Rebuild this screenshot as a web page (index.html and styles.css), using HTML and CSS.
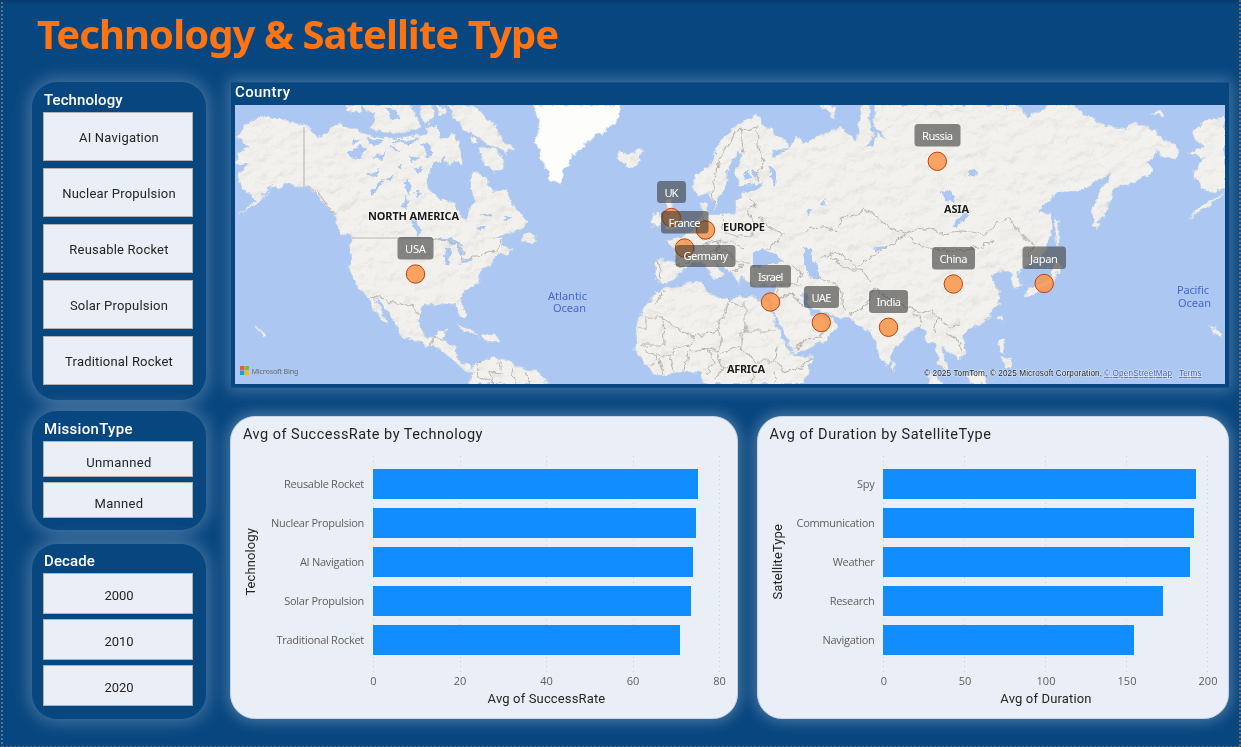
FILE: index.html
```html
<!DOCTYPE html>
<html lang="en">
<head>
<meta charset="utf-8">
<title>Technology &amp; Satellite Type</title>
<link rel="stylesheet" href="styles.css">
</head>
<body>
<div class="report">
  <h1 class="report-title"><span>Technology &amp; Satellite Type</span></h1>
  <div class="columns">
    <aside class="slicers">
      <section class="slicer slicer-technology">
        <h2>Technology</h2>
        <button>AI Navigation</button><button>Nuclear Propulsion</button><button>Reusable Rocket</button><button>Solar Propulsion</button><button>Traditional Rocket</button>
      </section>
      <section class="slicer slicer-mission">
        <h2>MissionType</h2>
        <button>Unmanned</button><button>Manned</button>
      </section>
      <section class="slicer slicer-decade">
        <h2>Decade</h2>
        <button>2000</button><button>2010</button><button>2020</button>
      </section>
    </aside>
    <main class="visuals">
      <section class="map-panel">
        <h2>Country</h2>
        <svg class="map" viewBox="235 105 990 279" width="990" height="279">
          <defs>
            <filter id="coast" x="235" y="105" width="990" height="279" filterUnits="userSpaceOnUse">
              <feTurbulence type="fractalNoise" baseFrequency="0.13" numOctaves="3" seed="4" result="n"/>
              <feDisplacementMap in="SourceGraphic" in2="n" scale="8" xChannelSelector="R" yChannelSelector="G"/>
            </filter>
            <filter id="relief" x="235" y="105" width="990" height="279" filterUnits="userSpaceOnUse" color-interpolation-filters="sRGB">
              <feTurbulence type="fractalNoise" baseFrequency="0.05 0.09" numOctaves="4" seed="9" result="n"/>
              <feColorMatrix in="n" type="matrix" values="0 0 0 0 0  0 0 0 0 0  0 0 0 0 0  1 0 0 0 0" result="h"/>
              <feDiffuseLighting in="h" surfaceScale="2.6" diffuseConstant="1.1" lighting-color="#ffffff" result="l"><feDistantLight azimuth="225" elevation="62"/></feDiffuseLighting>
              <feComposite in="l" in2="SourceAlpha" operator="in"/>
            </filter>
            <g id="land">
              <path d="M237 137L245 125 262 117 275 118 303 125 320 138 328 131 340 123 358 130 372 137 385 138 405 138 425 135 438 128 442 142 448 147 445 155 438 162 430 168 426 188 438 198 455 203 460 215 466 222 470 208 475 200 472 190 472 173 482 175 493 192 507 190 513 205 528 222 523 228 507 233 490 238 503 238 502 246 512 249 507 257 498 252 490 265 482 268 477 283 460 297 462 305 466 316 461 316 455 305 440 303 422 305 418 315 420 327 425 337 437 338 438 330 446 330 443 340 455 346 456 356 461 363 470 365 473 371 462 368 452 358 438 348 422 343 400 335 397 323 385 308 374 297 380 311 387 323 382 320 368 297 358 287 350 272 350 245 352 238 340 230 332 212 315 192 303 186 285 183 272 190 275 183 262 195 258 201 242 188 238 175 250 163 237 163 238 153 250 147Z"/>
              <path d="M345 105L362 105 360 112 352 113ZM363 105L412 105 415 115 420 128 400 133 382 132 370 128 377 118ZM422 106L431 105 433 116 427 125 421 117ZM427 128L436 124 437 133 429 135ZM447 105L475 107 485 118 495 125 500 137 513 150 505 153 490 145 478 136 465 130 455 118ZM480 150L493 148 503 158 505 170 495 172 485 165ZM440 141L455 135 460 150 463 163 455 160 447 166ZM523 236L530 233 537 240 530 243 522 240ZM436 106L444 106 446 113 438 114ZM472 138L477 138 477 143 473 143Z"/>
              <path d="M469 384L473 365 490 358 507 360 520 368 540 373 547 384Z"/>
              <path d="M618 152L628 154 642 150 641 160 632 167 622 162ZM663 200L672 199 673 208 679 219 680 226 667 229 669 214ZM652 215L661 212 662 222 653 226Z"/>
              <path d="M655 260L677 262 673 247 667 240 682 237 695 230 703 217 700 204 706 202 707 215 723 215 735 212 735 202 747 192 763 187 764 182 740 185 734 172 744 155 738 151 727 172 728 182 720 198 715 208 710 192 698 195 693 185 695 175 710 165 720 142 737 125 755 115 763 125 783 138 787 148 770 149 773 160 781 154 795 142 797 135 803 143 817 138 840 127 857 142 861 108 862 105 869 105 870 125 873 138 865 146 874 148 877 134 886 140 884 134 874 125 876 105 1017 105 1027 117 1040 112 1050 105 1073 105 1083 115 1103 125 1127 130 1133 123 1150 127 1167 142 1182 150 1173 160 1157 152 1147 162 1153 172 1133 182 1113 188 1110 198 1108 208 1095 228 1092 208 1100 192 1113 173 1100 178 1083 190 1057 192 1037 213 1050 215 1052 235 1040 258 1023 267 1016 272 1022 285 1014 288 1010 274 1000 270 990 277 1000 292 998 305 983 323 967 328 963 335 967 352 957 360 950 352 942 347 945 364 952 375 938 362 935 342 928 342 925 328 917 327 907 335 892 352 887 366 880 355 872 332 863 328 850 318 830 315 815 309 804 292 800 295 813 315 823 320 832 318 837 327 823 342 793 353 788 338 777 318 770 303 775 285 753 285 742 275 740 284 730 272 713 259 723 275 716 280 703 263 692 262 680 272 673 280 663 283 655 277Z"/>
              <path d="M672 287L700 282 707 292 730 302 737 295 763 300 769 306 780 335 792 355 813 357 807 375 800 384 703 384 702 373 677 372 660 375 643 365 635 348 637 325 643 308 657 292Z"/>
              <path d="M1054 262L1062 266 1054 280 1044 288 1026 296 1028 288 1044 283 1052 275ZM1055 218L1058 220 1059 240 1056 246ZM998 319L1001 316 1002 323ZM999 340L1004 340 1005 352 1000 350ZM1002 357L1011 360 1010 368 1003 365ZM892 361L896 367 892 371ZM966 376L984 370 987 384 970 384ZM929 373L936 377 941 384 930 384ZM820 105L833 107 835 117 829 113ZM1152 114L1160 110 1164 116ZM1225 117L1207 120 1192 133 1203 147 1188 153 1207 158 1193 172 1203 188 1216 193 1225 188ZM455 324L470 329 479 337 468 332ZM482 336L494 336 498 340 484 340ZM709 262L712 269 709 272Z"/>
              <path d="M272 191L254 205 238 215 255 202ZM1225 192L1206 208 1188 219 1203 205ZM254 326L266 334 265 337ZM1208 326L1222 334 1221 337Z"/>
            </g>
            <path id="ice" d="M533 105L540 122 536 142 543 162 550 178 562 184 564 172 573 155 597 135 617 123 620 105Z"/>
            <g id="lakes">
              <path d="M753 253L761 248 775 253 783 262 766 264 753 267ZM802 249L812 248 813 260 819 266 820 280 808 276 805 264ZM437 238L455 240 463 246 448 244ZM446 247L451 247 449 265 445 262ZM457 246L464 252 461 258ZM458 264L475 257 472 261ZM968 172L977 170 976 176 970 178ZM952 225L965 213 968 214 957 227ZM940 192L951 190 955 203 946 201ZM873 248L887 246 886 249 875 251ZM770 166L776 175 775 187 769 178ZM742 182L748 169 751 178Z"/>
              <path d="M348 153L360 145 367 148 359 159 350 158ZM374 156L385 153 382 161ZM366 173L380 169 377 177ZM370 194L380 181 385 179 375 192ZM386 178L394 175 389 182ZM407 178L412 187 409 195 405 187ZM412 221L417 219 421 231 418 234ZM407 156L421 158 411 162ZM389 145L401 150 394 151ZM480 215L490 213 493 217ZM503 216L512 218 505 220ZM477 227L486 226 482 231ZM400 205L412 201 408 207ZM391 140L410 140 421 137 409 145ZM422 143L431 146 435 155 426 157ZM384 108L396 112 402 121 392 118ZM404 194L409 204 405 209ZM414 168L423 166 419 175ZM397 165L404 163 401 170ZM415 190L422 194 417 197ZM366 136L371 140 384 141 372 147ZM352 139L360 141 354 145ZM1004 105L1007 107 1005 109ZM820 206L826 198 823 206ZM806 213L812 208 809 216ZM752 170L760 174 755 180Z"/>
            </g>
          </defs>
          <rect class="sea" x="235" y="105" width="990" height="279"/>
          <g filter="url(#coast)">
            <use href="#land" class="shore"/>
            <use href="#land" class="ground"/>
            <use href="#ice" class="snow"/>
            <use href="#lakes" class="sea"/>
          </g>
          <g class="hills" filter="url(#coast)"><g filter="url(#relief)"><use href="#land"/></g></g>
          <use href="#lakes" class="sea" filter="url(#coast)"/>
          <path class="borders" d="M304 127V186M352 238H432"/>
          <g class="borders" filter="url(#coast)">
            <path d="M304 186L318 192 331 211 335 216M432 238L455 244 465 251 462 261 484 254 498 249 502 241M369 297L387 299 399 305 409 303 420 316M429 346L436 337 443 341M480 360L477 375 495 384M499 362L501 373 489 372 494 383M512 369L515 384M525 371L529 384"/>
            <path d="M655 260L661 264 659 280M674 264L684 266M684 239L694 249 695 257 686 263M697 229L702 239 717 242 720 249 710 253M705 219L706 230M723 216L724 231 736 237 753 236 754 222 748 212 755 205 749 197M714 208L712 190 719 162 734 134 740 129 744 153M737 131L757 127 758 144 763 164 757 181M758 216L769 227 783 234 778 243 765 249M703 246L721 240 732 242 745 249M716 251L730 253 738 263 750 263M732 272L743 266M773 286L789 283 801 286M792 264L801 272 798 282M776 288L779 300 789 292 806 307M795 350L805 340 821 338 828 325M805 232L812 227 824 228 837 232 842 219 857 214 864 210 878 218 891 229 905 233 929 228 939 233 963 231 985 234 998 222 1009 219 1020 235 1034 244 1027 256M821 257L835 252 848 260 856 267 875 255 889 246 907 233M811 278L830 280 842 292 844 311M832 257L848 269 861 269 870 280M850 315L866 306 876 288 891 300 908 308 920 312 932 311 937 318 934 333M912 312L921 321 918 332M937 319L949 327 960 324M945 333L956 339 962 351M908 237L921 247 948 251 966 249 983 246 992 241"/>
            <path d="M638 328H646V318H663L692 338 716 332 730 302M663 317L664 345H641M663 292L654 306M693 338L690 346 676 348 668 357 649 353M716 332L722 336 718 350 690 349M730 302L745 307 745 327 741 347 719 353M745 301V331H776M741 331L741 349 756 361 774 361 779 346M688 351L684 371M670 357L673 372M660 359L663 374M707 350L714 363 705 374M717 353L724 368 714 380M724 368L743 364 755 372 753 384M774 360L783 373 801 368 811 358M775 372L774 384M645 350L657 358 651 367"/>
          </g>
          <g class="continent">
            <text x="368" y="220" textLength="91">NORTH AMERICA</text><text x="723" y="231" textLength="42">EUROPE</text><text x="944" y="213" textLength="25">ASIA</text><text x="727" y="373" textLength="38">AFRICA</text>
          </g>
          <g class="ocean">
            <text x="548" y="300" textLength="39">Atlantic</text><text x="553" y="312" textLength="33">Ocean</text><text x="1177" y="294" textLength="32">Pacific</text><text x="1178" y="307" textLength="33">Ocean</text>
          </g>
          <g class="bubbles">
            <circle cx="415.5" cy="274" r="9.2"/><circle cx="671.3" cy="217.5" r="9.2"/><circle cx="705.5" cy="230" r="9.2"/><circle cx="684.5" cy="248" r="9.2"/><circle cx="770.5" cy="302" r="9.2"/><circle cx="821.3" cy="322.5" r="9.2"/><circle cx="888.5" cy="327.3" r="9.2"/><circle cx="953.3" cy="284" r="9.2"/><circle cx="937.3" cy="161.3" r="9.2"/><circle cx="1044.2" cy="283.5" r="9.2"/>
          </g>
          <g class="tags">
            <rect x="397.5" y="237" width="36" height="22.5" rx="3.5"/><rect x="657" y="181" width="29" height="22" rx="3.5"/><rect x="661" y="211" width="47.5" height="22.5" rx="3.5"/><rect x="675.5" y="245" width="60" height="22" rx="3.5"/><rect x="750" y="265" width="41" height="22.5" rx="3.5"/><rect x="804" y="286" width="35" height="22" rx="3.5"/><rect x="869" y="290" width="39" height="23" rx="3.5"/><rect x="932" y="247" width="43" height="22.5" rx="3.5"/><rect x="914.5" y="124" width="46" height="22.5" rx="3.5"/><rect x="1022.5" y="246.5" width="43.5" height="22.5" rx="3.5"/>
          </g>
          <g class="tag-text">
            <text x="405" y="253" textLength="21">USA</text><text x="664.5" y="197" textLength="14">UK</text><text x="668.5" y="227" textLength="32">France</text><text x="683.5" y="260" textLength="44.5">Germany</text><text x="758" y="281" textLength="25.5">Israel</text><text x="811.5" y="302" textLength="20">UAE</text><text x="876.5" y="306" textLength="24.5">India</text><text x="939.5" y="263" textLength="28">China</text><text x="922" y="140" textLength="31">Russia</text><text x="1030" y="263" textLength="28">Japan</text>
          </g>
          <rect x="240" y="366" width="4.3" height="4.3" fill="#f1592a"/><rect x="244.7" y="366" width="4.3" height="4.3" fill="#80bb3e"/><rect x="240" y="370.7" width="4.3" height="4.3" fill="#0aa5ef"/><rect x="244.7" y="370.7" width="4.3" height="4.3" fill="#fdb913"/>
          <text class="bing" x="251.5" y="373.5" textLength="47">Microsoft Bing</text>
          <g class="credits">
            <text x="924" y="376" textLength="178">© 2025 TomTom, © 2025 Microsoft Corporation,</text>
            <text class="link" x="1104" y="376" textLength="68">© OpenStreetMap</text><text class="link" x="1179" y="376" textLength="22.5">Terms</text>
          </g>
        </svg>
      </section>
      <div class="charts">
        <section class="chart chart-rate">
          <h2>Avg of SuccessRate by Technology</h2>
          <div class="chart-body">
            <div class="axis-name"><span>Technology</span></div>
            <ul class="categories"><li>Reusable Rocket</li><li>Nuclear Propulsion</li><li>AI Navigation</li><li>Solar Propulsion</li><li>Traditional Rocket</li></ul>
            <div class="plot">
              <div class="gridlines"><i></i><i></i><i></i><i></i><i></i></div>
              <div class="bars"><b style="width:93.8%"></b><b style="width:93%"></b><b style="width:92.2%"></b><b style="width:91.7%"></b><b style="width:88.4%"></b></div>
              <div class="ticks"><span>0</span><span>20</span><span>40</span><span>60</span><span>80</span></div>
              <div class="value-name">Avg of SuccessRate</div>
            </div>
          </div>
        </section>
        <section class="chart chart-duration">
          <h2>Avg of Duration by SatelliteType</h2>
          <div class="chart-body">
            <div class="axis-name"><span>SatelliteType</span></div>
            <ul class="categories"><li>Spy</li><li>Communication</li><li>Weather</li><li>Research</li><li>Navigation</li></ul>
            <div class="plot">
              <div class="gridlines"><i></i><i></i><i></i><i></i><i></i></div>
              <div class="bars"><b style="width:96.1%"></b><b style="width:95.6%"></b><b style="width:94.4%"></b><b style="width:86%"></b><b style="width:77.2%"></b></div>
              <div class="ticks"><span>0</span><span>50</span><span>100</span><span>150</span><span>200</span></div>
              <div class="value-name">Avg of Duration</div>
            </div>
          </div>
        </section>
      </div>
    </main>
  </div>
</div>
</body>
</html>
```

FILE: styles.css
```css
* { box-sizing: border-box; }
body { margin: 0; background: #08467f; font-family: Roboto, "Liberation Sans", sans-serif; }
h1, h2, ul { margin: 0; padding: 0; font-weight: 400; list-style: none; }
.report {
  width: 1241px; height: 747px; overflow: hidden; padding-left: 32px;
  background:
    repeating-linear-gradient(#6b6a6c 0 2px, transparent 2px 4px) 1px 2px / 2px 100% no-repeat,
    repeating-linear-gradient(#6b6a6c 0 2px, transparent 2px 4px) 1239px 0 / 2px 100% no-repeat,
    repeating-linear-gradient(90deg, #6b6a6c 0 2px, transparent 2px 4px) 2px 746px / 100% 1px no-repeat,
    linear-gradient(#063c70, transparent 5px),
    #08467f;
}
.report-title {
  height: 82px; padding: 6px 0 0 5px; color: #ff7411;
  font: 700 40px/56px "Noto Sans", "Open Sans", sans-serif; white-space: nowrap;
}
.report-title span { letter-spacing: -.94px; }
.columns { display: flex; gap: 25px; }
.slicers { width: 174px; display: flex; flex-direction: column; }
.slicer {
  display: flex; flex-direction: column; padding: 0 13px 0 11px; border-radius: 25px;
  background: #08467f; box-shadow: 0 0 17px 3px rgba(225, 235, 250, .3);
}
.slicer h2 { color: #fff; font-size: 15px; font-weight: 500; line-height: 20px; letter-spacing: .1px; padding-left: 1px; }
.slicer button {
  font: 13px/16px Roboto, sans-serif; letter-spacing: .2px; color: #252423;
  background: #eaeff7; border: 1px solid #b3b0ad; padding: 0 0 0 2px;
}
.slicer-technology { height: 318px; padding-top: 8px; gap: 7px; }
.slicer-technology h2 { margin-bottom: -5px; }
.slicer-technology button { height: 49px; padding-top: 3px; }
.slicer-mission { height: 119px; margin-top: 11px; padding-top: 8px; gap: 5px; }
.slicer-mission h2 { margin-bottom: -3px; letter-spacing: .3px; }
.slicer-mission button { height: 36px; padding-top: 7px; letter-spacing: .35px; }
.slicer-decade { height: 175px; margin-top: 14px; padding-top: 7px; gap: 5.5px; }
.slicer-decade h2 { margin-bottom: -3.5px; }
.slicer-decade button { height: 40.5px; padding-top: 5px; letter-spacing: 0; }

.visuals { width: 998px; }
.map-panel {
  height: 306px; padding: 1px 4px 4px; background: #08467f;
  box-shadow: 0 0 14px 3px rgba(225, 235, 250, .27); border: 1px solid #15508a; border-width: 1px 0;
}
.map-panel h2 { height: 21px; line-height: 17px; font-size: 15px; font-weight: 500; letter-spacing: .4px; color: #fff; }
.map { display: block; }
.sea { fill: #acc8f2; }
.shore { fill: none; stroke: #c5d5e6; stroke-width: 1.5; }
.ground { fill: #f2f1ed; }
.snow { fill: #fdfdfc; stroke: #e2e6e8; }
.hills { mix-blend-mode: multiply; opacity: .15; }
.borders { fill: none; stroke: #bbb7b2; stroke-width: 1.1; }
.continent, .ocean, .tag-text { font-family: "Noto Sans", "Open Sans", sans-serif; }
.continent { font-size: 11px; font-weight: 700; fill: #1a1a1a; stroke: #fff; stroke-width: 1.5px; stroke-opacity: .6; paint-order: stroke; }
.ocean { font-size: 11px; fill: #4767cb; }
.bubbles { fill: #f99447; fill-opacity: .84; stroke: #c4400e; stroke-width: 1; }
.tags { fill: #3b3a39; fill-opacity: .6; }
.tag-text { font-size: 11.2px; fill: #fff; }
.bing { font: 500 7.2px "Noto Sans", sans-serif; fill: #70757e; }
.credits { font: 8.2px "Liberation Sans", Arial, sans-serif; fill: #222; stroke: #fff; stroke-width: 1.2px; stroke-opacity: .5; paint-order: stroke; }
.credits .link { fill: #4c60b3; text-decoration: underline; }

.charts { display: flex; gap: 19px; margin: 28px 0 0 -1px; width: 999px; }
.chart { height: 303px; padding-top: 1px; border: 1px solid #c6d3e3; border-radius: 25px; background: #eaeff7; box-shadow: 0 0 14px 3px rgba(225, 235, 250, .3); }
.chart-rate { width: 509px; }
.chart-duration { width: 472px; }
.chart h2 { height: 38px; padding: 8px 0 0 12px; font-size: 14.5px; line-height: 18px; letter-spacing: .48px; color: #252423; }
.chart-duration h2 { padding-left: 11px; letter-spacing: .56px; }
.chart-body { display: flex; }
.axis-name { width: 24px; margin-left: 7px; height: 212px; display: flex; align-items: center; justify-content: center; font-size: 13px; letter-spacing: .1px; color: #252423; }
.axis-name span { writing-mode: vertical-rl; transform: rotate(180deg); white-space: nowrap; }
.categories { padding-top: 13px; display: flex; flex-direction: column; gap: 9px; text-align: right; font: 11px/30px "Open Sans", "Noto Sans", sans-serif; letter-spacing: -.28px; color: #605e5c; white-space: nowrap; }
.chart-rate .categories { width: 102px; }
.chart-duration .categories { width: 85px; }
.plot { display: grid; grid-template-rows: 216px 17px 19px; margin-left: 9px; }
.chart-rate .plot { width: 347px; }
.chart-duration .plot { width: 325px; }
.gridlines, .bars { grid-area: 1 / 1; }
.gridlines { display: flex; justify-content: space-between; }
.gridlines i { width: 1px; background: repeating-linear-gradient(#cfcfd1 0 1px, transparent 1px 4.67px); }
.bars { padding-top: 13px; display: flex; flex-direction: column; gap: 9px; }
.bars b { height: 30px; background: #118dff; }
.ticks { display: flex; justify-content: space-between; font: 11px/17px "Open Sans", "Noto Sans", sans-serif; color: #605e5c; }
.ticks span { width: 1px; display: flex; justify-content: center; }
.value-name { text-align: center; font-size: 13px; line-height: 19px; letter-spacing: .15px; color: #252423; }
```
